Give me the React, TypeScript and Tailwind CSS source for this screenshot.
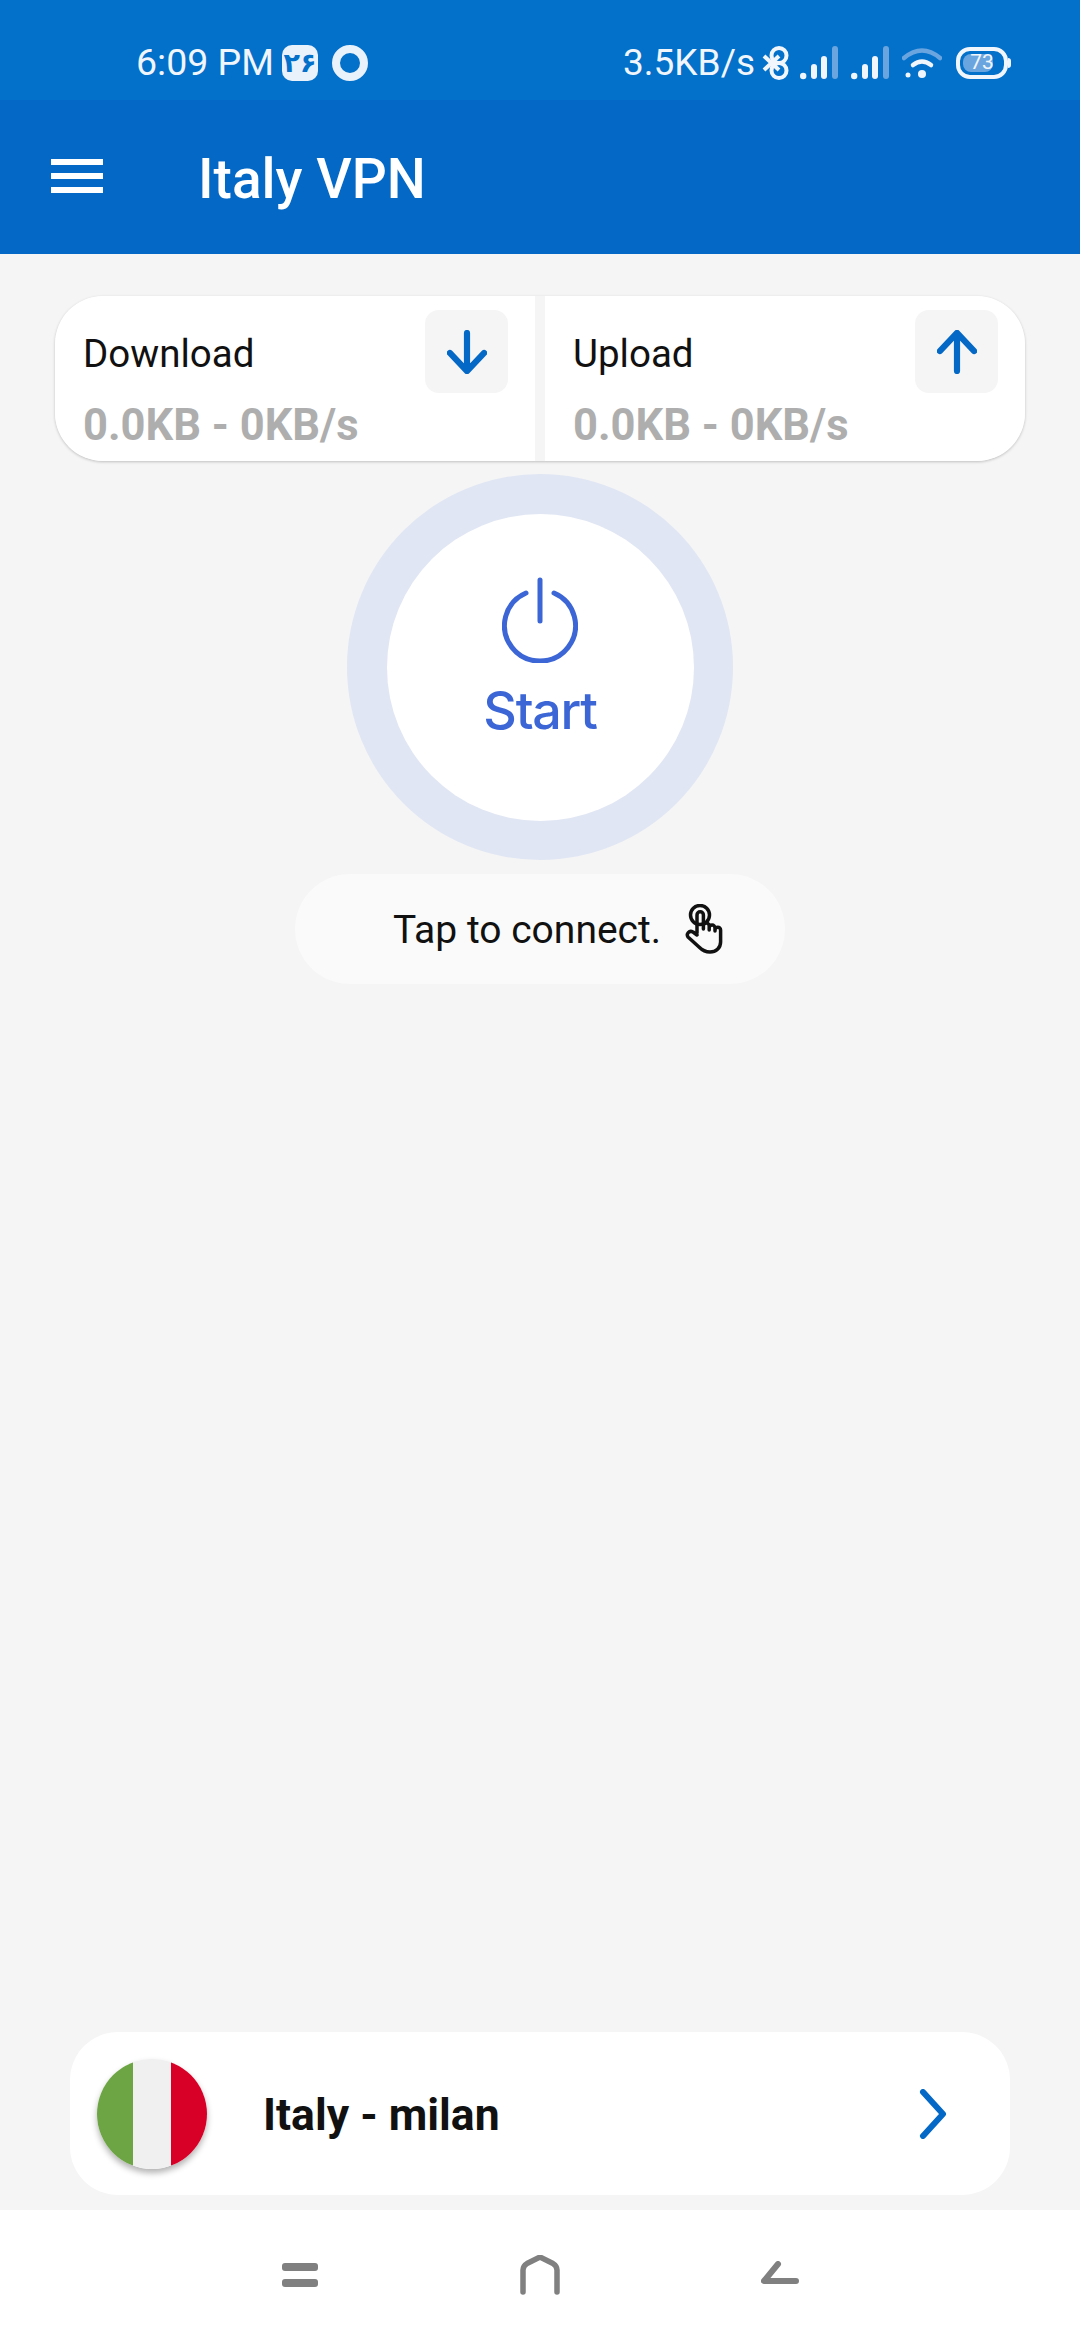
const roboto = "font-['Roboto',sans-serif]";

function SignalIcon() {
  return (
    <svg width="38" height="34" viewBox="0 0 38 34" fill="#f1f6fc">
      <circle cx="3.2" cy="30" r="3.2" />
      <rect x="11" y="18" width="6" height="15" rx="3" />
      <rect x="21" y="10" width="6" height="23" rx="3" />
      <rect x="32" y="0" width="6" height="33" rx="3" fill="#6aa5e0" />
    </svg>
  );
}

function StatusIcons() {
  return (
    <div className="flex items-center">
      <span className="text-[37px] leading-none text-[#f1f6fc]">3.5KB/s</span>
      <svg width="27" height="34" viewBox="0 0 27 34" fill="none" stroke="#f1f6fc" strokeWidth="4" className="ml-[7px]">
        <circle cx="17" cy="9.5" r="7.5" />
        <circle cx="17" cy="24.5" r="7.5" />
        <path d="M2 10 L17 24 M2 24 L17 10" />
      </svg>
      <div className="ml-[11px]"><SignalIcon /></div>
      <div className="ml-[13px]"><SignalIcon /></div>
      <svg width="40" height="34" viewBox="0 0 40 34" fill="none" className="ml-[13px]">
        <path d="M2 12 Q20 -3 38 12" stroke="#6aa5e0" strokeWidth="4.5" strokeLinecap="round" />
        <path d="M11 19 Q20 12 29 19" stroke="#f1f6fc" strokeWidth="4.5" strokeLinecap="round" />
        <circle cx="20" cy="28" r="4" fill="#f1f6fc" />
        <circle cx="6" cy="29" r="2.5" fill="#f1f6fc" />
      </svg>
      <div className="relative ml-[14px] flex h-[32px] w-[52px] items-center rounded-[14px] border-[4px] border-[#f1f6fc] px-[3px]">
        <div className="h-[18px] w-[30px] rounded-[8px] bg-[#6aa5e0]" />
        <span className="absolute inset-0 flex items-center justify-center text-[21px] leading-none text-[#f1f6fc]">73</span>
      </div>
      <div className="h-[10px] w-[3px] rounded-r-full bg-[#f1f6fc]" />
    </div>
  );
}

function StatCard({ label, down, side }: { label: string; down?: boolean; side: string }) {
  return (
    <div className={`relative h-full w-[480px] bg-white pl-[28px] ${side}`}>
      <div className="pt-[38px] text-[38.5px] leading-[40px] text-[#111]">{label}</div>
      <div className="mt-[28px] text-[43.5px] font-bold leading-[48px] text-[#aeaeae]">0.0KB - 0KB/s</div>
      <div className="absolute right-[27px] top-[14px] flex h-[83px] w-[83px] items-center justify-center rounded-[14px] bg-[#f5f5f5]">
        <svg width="40" height="44" viewBox="0 0 42 46" fill="none" stroke="#0368c6" strokeWidth="6.5" strokeLinecap="round" strokeLinejoin="round" className={down ? "" : "rotate-180"}>
          <path d="M21 3 V42 M3 24 L21 43 L39 24" />
        </svg>
      </div>
    </div>
  );
}

function HandIcon() {
  return (
    <svg width="40" height="50" viewBox="0 0 40 50" fill="none" stroke="#111" strokeWidth="3.5" strokeLinecap="round" strokeLinejoin="round">
      <circle cx="15" cy="11" r="9.5" />
      <path d="M12 29 V11 a3.2 3.2 0 0 1 6.4 0 V25 M18.4 22 a2.9 2.9 0 0 1 5.8 0 V26 M24.2 24 a2.9 2.9 0 0 1 5.8 0 V27 M30 26 a2.8 2.8 0 0 1 5.6 0 V38 C35.6 44 31 48 25 48 C20 48 17 46 14 43 L3 33 C1 30 4 26 8 28 L12 31" />
    </svg>
  );
}

export default function App() {
  return (
    <div className={`flex h-[2340px] w-[1080px] flex-col overflow-hidden bg-[#f5f5f5] ${roboto}`}>
      {/* status bar */}
      <div className="flex h-[100px] items-center justify-between bg-[#0370ca] pl-[136px] pr-[69px] pt-[25px]">
        <div className="flex items-center">
          <span className="text-[37.5px] leading-none text-[#f1f6fc]">6:09 PM</span>
          <div className="ml-[8px] flex h-[36px] w-[36px] items-center justify-center rounded-[10px] bg-[#e9f1fa] font-['DejaVu_Sans',sans-serif] text-[27px] font-bold leading-none text-[#0370ca]">
            ۲۶
          </div>
          <div className="ml-[14px] h-[36px] w-[36px] rounded-full border-[8px] border-[#e9f1fa]" />
        </div>
        <StatusIcons />
      </div>

      {/* app bar */}
      <div className="flex h-[154px] items-center bg-[#0368c6] pl-[51px]">
        <div className="mb-[3px] flex w-[52px] flex-col gap-[8px]">
          <div className="h-[6px] bg-white" />
          <div className="h-[6px] bg-white" />
          <div className="h-[6px] bg-white" />
        </div>
        <h1 className="ml-[95px] mt-[4px] text-[55px] font-medium leading-none text-white">Italy VPN</h1>
      </div>

      {/* content */}
      <div className="flex flex-1 flex-col items-center">
        <div className="mt-[42px] flex h-[165px] w-[970px] justify-between rounded-[48px] shadow-[0_1px_3px_rgba(0,0,0,0.22)]">
          <StatCard label="Download" down side="rounded-l-[48px]" />
          <StatCard label="Upload" side="rounded-r-[48px]" />
        </div>

        <div className="mt-[13px] flex h-[386px] w-[386px] items-center justify-center rounded-full bg-[#e0e6f3]">
          <div className="flex h-[307px] w-[307px] flex-col items-center rounded-full bg-white pt-[63px]">
            <svg width="76" height="86" viewBox="0 0 76 86" fill="none" stroke="#3c66d6" strokeWidth="5" strokeLinecap="round">
              <path d="M38 3 V44" />
              <path d="M24 16 A35.5 35.5 0 1 0 52 16" />
            </svg>
            <span className="mt-[18px] font-['Inter',sans-serif] text-[52px] font-medium leading-[60px] tracking-[-0.025em] text-[#3c66d6]">Start</span>
          </div>
        </div>

        <div className="mt-[14px] flex h-[110px] w-[490px] items-center rounded-full bg-[#fafafa] pl-[98px]">
          <span className="mt-[2px] text-[39px] leading-none text-[#111]">Tap to connect.</span>
          <div className="ml-[24px]"><HandIcon /></div>
        </div>

        {/* server selector */}
        <div className="mb-[15px] mt-auto flex h-[163px] w-[940px] items-center rounded-[48px] bg-white pl-[27px] pr-[63px]">
          <div className="relative h-[110px] w-[110px] shrink-0 overflow-hidden rounded-full shadow-[0_4px_6px_rgba(0,0,0,0.3)]">
            <div className="flex h-full w-full">
              <div className="w-[36px] bg-[#6da544]" />
              <div className="w-[38px] bg-[#f0f0f0]" />
              <div className="flex-1 bg-[#d80027]" />
            </div>
          </div>
          <span className="ml-[56px] mt-[3px] text-[44.5px] font-bold leading-none text-[#111]">Italy - milan</span>
          <svg width="28" height="50" viewBox="0 0 28 50" fill="none" stroke="#0368c6" strokeWidth="6" strokeLinecap="round" strokeLinejoin="round" className="ml-auto">
            <path d="M4 3 L24 25 L4 47" />
          </svg>
        </div>
      </div>

      {/* nav bar */}
      <div className="flex h-[130px] items-start justify-between bg-white pl-[282px] pr-[281px] pt-[45px]">
        <svg width="36" height="24" viewBox="0 0 36 24" fill="#808080" className="mt-[8px]">
          <rect x="0" y="0" width="36" height="8" rx="3" />
          <rect x="0" y="16" width="36" height="8" rx="3" />
        </svg>
        <svg width="40" height="40" viewBox="0 0 40 40" fill="none" stroke="#808080" strokeWidth="5.5" strokeLinejoin="round" strokeLinecap="round">
          <path d="M3 37 V15 Q3 11 7 8.5 L20 2 L33 8.5 Q37 11 37 15 V37" />
        </svg>
        <svg width="38" height="26" viewBox="0 0 38 26" fill="none" stroke="#808080" strokeWidth="6" strokeLinecap="round" strokeLinejoin="round" className="mt-[6px]">
          <path d="M17 3 L3 20 H35" />
        </svg>
      </div>
    </div>
  );
}
